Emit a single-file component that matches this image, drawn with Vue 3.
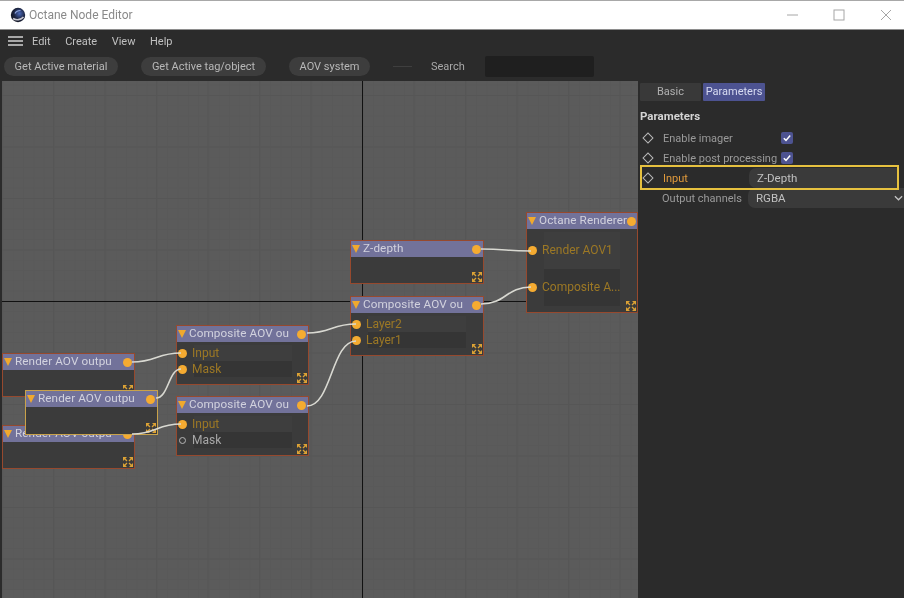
<script setup>
const nodes = [
  { id: 'r1', x: 2, y: 353, w: 133, h: 44, title: 'Render AOV outpu', rows: [] },
  { id: 'r3', x: 2, y: 425, w: 133, h: 44, title: 'Render AOV outpu', rows: [] },
  { id: 'r2', x: 25, y: 390, w: 133, h: 45, title: 'Render AOV outpu', rows: [], selected: true },
  { id: 'c1', x: 176, y: 325, w: 133, h: 60, title: 'Composite AOV ou', rows: [{ label: 'Input', on: true }, { label: 'Mask', on: true }] },
  { id: 'c2', x: 176, y: 396, w: 133, h: 60, title: 'Composite AOV ou', rows: [{ label: 'Input', on: true }, { label: 'Mask', on: false }] },
  { id: 'c3', x: 350, y: 296, w: 134, h: 60, title: 'Composite AOV ou', rows: [{ label: 'Layer2', on: true }, { label: 'Layer1', on: true }] },
  { id: 'z', x: 350, y: 240, w: 134, h: 44, title: 'Z-depth', rows: [] },
  { id: 'o', x: 526, y: 212, w: 112, h: 101, title: 'Octane Renderer', tall: true, rows: [{ label: 'Render AOV1', on: true }, { label: 'Composite A...', on: true }] }
]

const links = [
  [132, 362, 181, 353],
  [156, 398, 181, 369],
  [132, 434, 181, 424],
  [307, 333, 356, 324],
  [307, 406, 356, 341],
  [481, 249, 531, 251],
  [481, 304, 531, 287]
]
const wire = ([a, b, c, d]) => {
  const m = (a + c) / 2
  return `M${a} ${b}C${m} ${b} ${m} ${d} ${c} ${d}`
}
const nodeBox = (n) => ({
  left: n.x - 2 + 'px',
  top: n.y - 81 + 'px',
  width: n.w + 'px',
  height: n.h + 'px'
})
const menus = ['Edit', 'Create', 'View', 'Help']
const params = [
  { label: 'Enable imager', check: true },
  { label: 'Enable post processing', check: true }
]
</script>

<template>
  <div class="window">
    <header class="titlebar">
      <svg class="logo" viewBox="0 0 16 16" width="16" height="16">
        <defs>
          <radialGradient id="lg" cx="0.6" cy="0.4" r="0.7">
            <stop offset="0" stop-color="#4a68b8" />
            <stop offset="0.55" stop-color="#1c2440" />
            <stop offset="1" stop-color="#14161f" />
          </radialGradient>
        </defs>
        <circle cx="8" cy="8" r="7.2" fill="url(#lg)" />
        <path d="M3 11.5C6 13.5 11 13 13.5 10" fill="none" stroke="#c9c9d2" stroke-width="1.6" />
        <path d="M5 6.5C6 4.5 8 3.5 10.5 3.5" fill="none" stroke="#8fa6e0" stroke-width="1.2" />
      </svg>
      <span class="app-title">Octane Node Editor</span>
      <div class="win-controls">
        <svg viewBox="0 0 12 12" width="12" height="12"><path d="M1 6H12" /></svg>
        <svg viewBox="0 0 12 12" width="12" height="12"><rect x="1" y="1" width="10" height="10" /></svg>
        <svg viewBox="0 0 12 12" width="12" height="12"><path d="M1 1L11 11M11 1L1 11" /></svg>
      </div>
    </header>

    <nav class="menubar">
      <span class="hamburger"><i></i><i></i><i></i></span>
      <span v-for="m in menus" :key="m" class="menu">{{ m }}</span>
    </nav>

    <div class="toolbar">
      <button class="pill p1">Get Active material</button>
      <button class="pill p2">Get Active tag/object</button>
      <button class="pill p3">AOV system</button>
      <span class="dash"></span>
      <span class="search-label">Search</span>
      <span class="search-box"></span>
    </div>

    <main class="main">
      <section class="canvas">
        <i class="axis-v"></i>
        <i class="axis-h"></i>
        <article
          v-for="n in nodes"
          :key="n.id"
          class="node"
          :class="{ selected: n.selected, tall: n.tall }"
          :style="nodeBox(n)"
        >
          <div class="node-head">
            <i class="tri"></i>
            <span class="node-title">{{ n.title }}</span>
            <i class="dot out"></i>
          </div>
          <div class="node-body">
            <div v-for="r in n.rows" :key="r.label" class="row">
              <i v-if="r.on" class="dot"></i>
              <i v-else class="hollow"></i>
              <span class="row-label" :class="{ off: !r.on }">{{ r.label }}</span>
            </div>
          </div>
          <svg class="expand" viewBox="0 0 10 10" width="10" height="10">
            <path d="M0 0H4L0 4ZM10 0V4L6 0ZM0 10V6L4 10ZM10 10H6L10 6Z" />
            <path class="stem" d="M1.5 1.5L4 4M8.5 1.5L6 4M1.5 8.5L4 6M8.5 8.5L6 6" />
          </svg>
        </article>
        <svg class="wires" viewBox="2 81 636 517" width="636" height="517">
          <path v-for="(l, i) in links" :key="i" :d="wire(l)" />
        </svg>
      </section>

      <aside class="panel">
        <div class="tabs">
          <span class="tab">Basic</span>
          <span class="tab active">Parameters</span>
        </div>
        <h2 class="panel-title">Parameters</h2>
        <div v-for="p in params" :key="p.label" class="param">
          <i class="diamond"></i>
          <span class="param-label">{{ p.label }}</span>
          <span class="check">
            <svg viewBox="0 0 12 12" width="12" height="12"><path d="M2.8 6.2L5 8.4L9.2 3.6" /></svg>
          </span>
        </div>
        <div class="param highlighted">
          <i class="diamond"></i>
          <span class="param-label accent">Input</span>
          <span class="field">Z-Depth</span>
        </div>
        <div class="param last">
          <span class="param-label">Output channels</span>
          <span class="field select">
            RGBA
            <svg viewBox="0 0 10 6" width="9" height="6"><path d="M1 1L5 5L9 1" /></svg>
          </span>
        </div>
      </aside>
    </main>
  </div>
</template>

<style>
html, body { margin: 0; background: #2b2b2b; overflow: hidden; }
</style>

<style scoped>
.window {
  width: 904px;
  height: 598px;
  display: flex;
  flex-direction: column;
  overflow: hidden;
  background: #2b2b2b;
  font-family: Roboto, "Open Sans", sans-serif;
  font-size: 11px;
  color: #b4b4b4;
  filter: blur(0.4px);
}
.titlebar {
  height: 30px;
  flex: none;
  box-sizing: border-box;
  border-top: 1px solid #a8a8a8;
  border-bottom: 1px solid #8e8e8e;
  background: #fff;
  display: flex;
  align-items: center;
  padding-left: 10px;
}
.logo { flex: none; margin-right: 3px; }
.app-title { color: #8a8a8a; font-size: 12px; }
.win-controls { margin-left: auto; display: flex; gap: 35px; padding-right: 12px; }
.win-controls svg { fill: none; stroke: #a6a6a6; stroke-width: 1; }

.menubar {
  height: 24px;
  flex: none;
  display: flex;
  align-items: center;
  padding: 0 0 2px 8px;
  color: #c0c0c0;
  box-sizing: border-box;
}
.hamburger { width: 15px; display: flex; flex-direction: column; gap: 2px; margin-right: 9px; }
.hamburger i { height: 2px; background: #a8a8a8; display: block; }
.menu { margin-right: 14.5px; }

.toolbar {
  height: 27px;
  flex: none;
  display: flex;
  align-items: center;
  padding-left: 4px;
  padding-bottom: 2px;
  box-sizing: border-box;
}
.pill {
  height: 19px;
  border: 0;
  border-radius: 10px;
  background: #3d3d3d;
  color: #b8b8b8;
  font: inherit;
  padding: 0;
  text-align: center;
}
.p1 { width: 114px; margin-right: 23px; }
.p2 { width: 125px; margin-right: 23px; }
.p3 { width: 81px; margin-right: 23px; }
.dash { width: 19px; height: 1px; background: #3f3f3f; margin-right: 19px; }
.search-label { width: 54px; color: #a8a8a8; }
.search-box { width: 109px; height: 21px; border-radius: 2px; background: #1f1f1f; }

.main { flex: 1; display: flex; min-height: 0; }
.canvas {
  position: relative;
  margin-left: 2px;
  width: 636px;
  flex: none;
  overflow: hidden;
  background-color: #5b5b5b;
  background-image:
    linear-gradient(90deg, #565656 1px, transparent 1px),
    linear-gradient(#565656 1px, transparent 1px),
    linear-gradient(90deg, #595959 1px, transparent 1px),
    linear-gradient(#595959 1px, transparent 1px);
  background-size: 51.5px 51.5px, 51.5px 51.5px, 10.3px 10.3px, 10.3px 10.3px;
  background-position: 51px 14px, 51px 14px, 0.5px 3.7px, 0.5px 3.7px;
}
.axis-v { position: absolute; left: 360px; top: 0; bottom: 0; width: 1px; background: #111; }
.axis-h { position: absolute; left: 0; right: 0; top: 220px; height: 1px; background: #111; }

.node {
  position: absolute;
  box-sizing: border-box;
  border: 1px solid #96492e;
  background: #3b3b3b;
}
.node.selected { border-color: #c9a24a; }
.node-head {
  height: 16px;
  background: #72729a;
  display: flex;
  align-items: center;
  padding: 0 2px 0 1px;
  color: #d2d2de;
  font-size: 11.7px;
  line-height: 14px;
}
.tri {
  flex: none;
  width: 0;
  height: 0;
  border-left: 4.5px solid transparent;
  border-right: 4.5px solid transparent;
  border-top: 8px solid #f0a92e;
  margin-right: 3px;
}
.node-title { white-space: nowrap; padding-bottom: 2px; letter-spacing: 0.1px; }
.dot {
  flex: none;
  display: block;
  width: 9px;
  height: 9px;
  border-radius: 50%;
  background: #f5ab31;
}
.dot.out { margin-left: auto; }
.hollow {
  flex: none;
  display: block;
  box-sizing: border-box;
  width: 7px;
  height: 7px;
  margin: 0 1px;
  border-radius: 50%;
  border: 1px solid #b5b5b5;
}
.node-body { padding: 3px 0 0 1px; }
.row { height: 16px; display: flex; align-items: center; }
.row-label {
  width: 100px;
  margin-left: 5px;
  height: 100%;
  line-height: 16px;
  font-size: 12px;
  color: #9c7825;
  white-space: nowrap;
  background: linear-gradient(90deg, transparent 2px, #3e3e3e 2px);
}
.row + .row .row-label { background: linear-gradient(90deg, transparent 2px, #353535 2px); }
.row-label.off { color: #a8a8a8; }
.tall .row { height: 37px; }
.tall .row-label { width: 78px; height: 37px; line-height: 37px; }
.expand {
  position: absolute;
  right: 1px;
  bottom: 1px;
  fill: #dca235;
}
.stem { fill: none; stroke: #dca235; stroke-width: 1.3; }
.wires { position: absolute; left: 0; top: 0; pointer-events: none; }
.wires path { fill: none; stroke: #d9d9d2; stroke-width: 1.6; }

.panel { flex: 1; position: relative; padding: 2px 0 0 2px; min-width: 0; }
.tabs { display: flex; gap: 2px; height: 18px; }
.tab {
  width: 61px;
  height: 18px;
  line-height: 18px;
  background: #393939;
  text-align: center;
  border-radius: 1px;
  color: #b0b0b0;
}
.tab.active { width: 62px; background: #4d5391; color: #d8dcf2; }
.panel-title {
  margin: 8px 0 0;
  height: 19px;
  line-height: 15px;
  font-size: 11.5px;
  font-weight: 700;
  color: #d4d4d4;
}
.param {
  position: relative;
  height: 20px;
  display: flex;
  align-items: center;
  padding-left: 4px;
  color: #9a9a9a;
}
.diamond {
  flex: none;
  width: 6px;
  height: 6px;
  border: 1px solid #b8b8b8;
  transform: rotate(45deg);
  margin: 0 11px 0 0;
}
.param-label { white-space: nowrap; width: 118px; flex: none; }
.check {
  width: 12px;
  height: 12px;
  border-radius: 2px;
  background: #4d5391;
  display: block;
}
.check svg { display: block; fill: none; stroke: #fff; stroke-width: 1.5; }
.highlighted { margin-right: 5px; z-index: 1; }
.highlighted::after {
  content: "";
  position: absolute;
  left: 0;
  right: 0;
  top: -3px;
  bottom: -2px;
  border: 2px solid #e6c13f;
  box-sizing: border-box;
  pointer-events: none;
}
.accent { color: #e09a3c; width: 86px; }
.field {
  flex: 1;
  align-self: stretch;
  display: flex;
  align-items: center;
  padding-left: 8px;
  font-size: 11.5px;
  background: #3a3a3a;
  border-radius: 7px 0 0 7px;
  color: #c0c0c0;
}
.last { padding-left: 22px; }
.last .param-label { width: 86px; }
.select { justify-content: space-between; padding-right: 1px; }
.select svg { fill: none; stroke: #c4c4c4; stroke-width: 1.4; }
</style>
